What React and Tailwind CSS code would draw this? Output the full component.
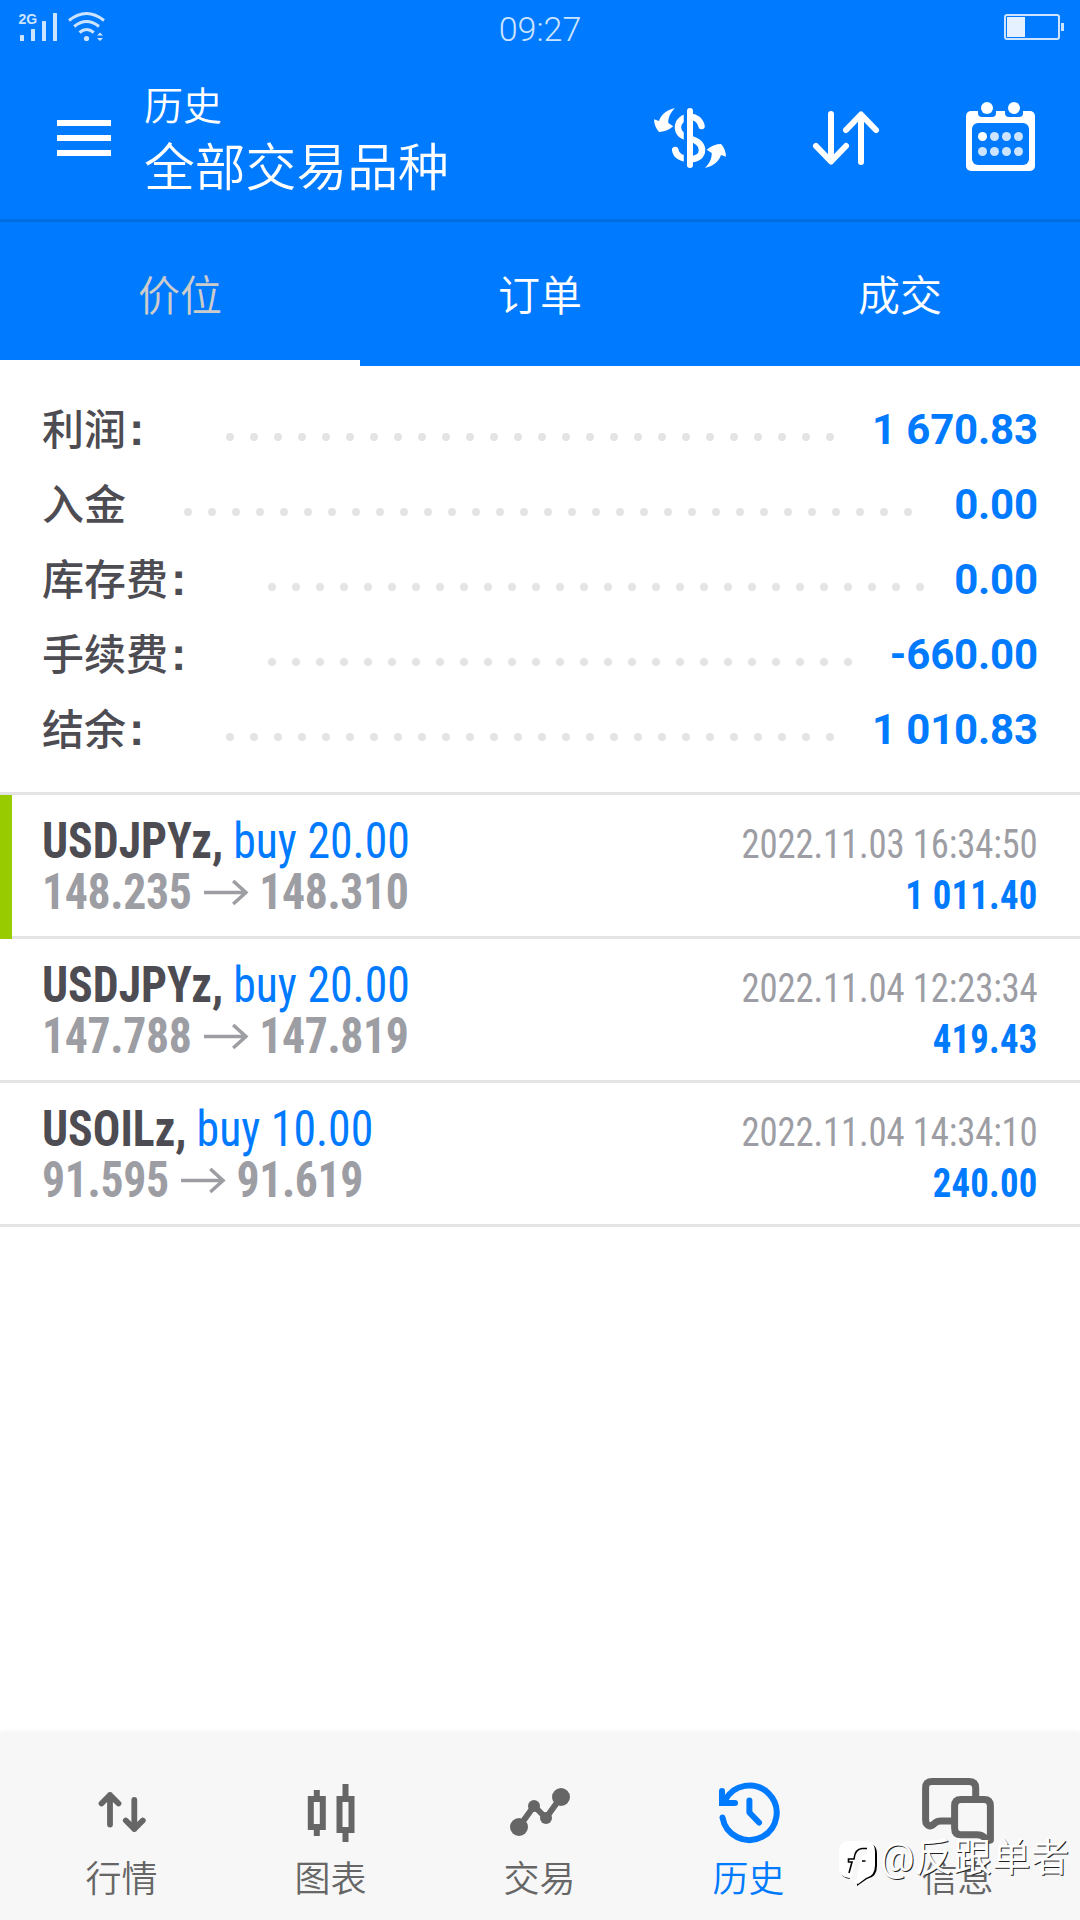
import clsx from 'clsx'

const summary = [
  { label: '利润', colon: true, value: '1 670.83', dots: 26 },
  { label: '入金', value: '0.00', dots: 31 },
  { label: '库存费', colon: true, value: '0.00', dots: 28 },
  { label: '手续费', colon: true, value: '-660.00', dots: 25 },
  { label: '结余', colon: true, value: '1 010.83', dots: 26 },
]

const positions = [
  { id: 1, symbol: 'USDJPYz,', side: 'buy 20.00', open: '148.235', close: '148.310', time: '2022.11.03 16:34:50', profit: '1 011.40', marked: true },
  { id: 2, symbol: 'USDJPYz,', side: 'buy 20.00', open: '147.788', close: '147.819', time: '2022.11.04 12:23:34', profit: '419.43' },
  { id: 3, symbol: 'USOILz,', side: 'buy 10.00', open: '91.595', close: '91.619', time: '2022.11.04 14:34:10', profit: '240.00' },
]

const tabs = ['价位', '订单', '成交']

function SignalIcon() {
  return (
    <svg width="90" height="42" viewBox="18 0 90 42" fill="#cce4ff">
      <text x="18.5" y="24" fontSize="14" fontWeight="bold" fontFamily="Liberation Sans, sans-serif">2G</text>
      <rect x="20" y="35" width="4" height="6" rx="0.5" />
      <rect x="31" y="29" width="4" height="12" rx="0.5" />
      <rect x="42" y="21" width="4" height="20" rx="0.5" />
      <rect x="53" y="13" width="4" height="28" rx="0.5" />
      <g fill="none" stroke="#cce4ff" strokeWidth="3">
        <path d="M69 20.5Q86.5 6.500 104 20.500" />
        <path d="M74.200 26.500Q86.500 16.500 99 26.500" />
        <path d="M79.500 32.500Q86.500 26.500 93.800 32.500" />
      </g>
      <circle cx="86.500" cy="38.500" r="2.600" />
      <path d="M97 35.600L100 32.600L103 35.600ZM97 38L100 41L103 38Z" />
    </svg>
  )
}

function ExchangeIcon() {
  const arrow = 'M21 6C12 8 7 13 5 19L0 17.300C0 22 2 27 5 30C10 30 15 28 19.300 24.300L14.300 21C14 15 17 10 21 6Z'
  return (
    <svg width="72" height="72" viewBox="0 0 72 72" fill="none">
      <path d="M47.500 24C46 18 41.500 14.800 36 14.800C29 14.800 24 19.500 24 25.500C24 32.500 30 34.500 36 36.500C43 38.500 48 42 48 48C48 54 43 57 36 57C27.500 57 22 53.500 21.200 48" stroke="white" strokeWidth="6.500" strokeLinecap="round" />
      <path d="M31.500 8V64" stroke="#007aff" strokeWidth="3.500" />
      <path d="M36 9V63" stroke="white" strokeWidth="6" strokeLinecap="round" />
      <path d={arrow} fill="white" />
      <path d={arrow} fill="white" transform="rotate(180 36 36)" />
    </svg>
  )
}

function SortIcon() {
  return (
    <svg width="72" height="72" viewBox="0 0 72 72" fill="none" stroke="white" strokeWidth="6" strokeLinecap="round" strokeLinejoin="round">
      <path d="M21 12V59M6 44L21 59.500L36 44" />
      <path d="M51 60V13M36 28L51 12.500L66 28" />
    </svg>
  )
}

function CalendarIcon() {
  return (
    <svg width="72" height="72" viewBox="0 0 72 72" fill="none">
      <rect x="0" y="9" width="69" height="60" rx="5" fill="white" />
      <rect x="12" y="5" width="18" height="10" rx="4" fill="#007aff" />
      <rect x="39" y="5" width="18" height="10" rx="4" fill="#007aff" />
      <circle cx="21" cy="6" r="6" fill="white" />
      <circle cx="48" cy="6" r="6" fill="white" />
      <rect x="6" y="21" width="57" height="42" rx="6" fill="#007aff" />
      {[34.5, 49.5].map(y =>
        [16.5, 28.5, 40.5, 52.5].map(x =>
          <circle key={x + '-' + y} cx={x} cy={y} r="4.500" fill={x === 16.5 && y === 34.5 ? 'white' : '#cce4ff'} />
        )
      )}
    </svg>
  )
}

function QuotesIcon() {
  return (
    <g strokeWidth="5.800">
      <path d="M24 48.500V19M15.500 27.500L24 19L32.500 27.500" />
      <path d="M48.300 24V53M39.800 44.500L48.300 53L56.800 44.500" />
    </g>
  )
}

function ChartIcon() {
  return (
    <g strokeWidth="6" strokeLinecap="butt" strokeLinejoin="miter">
      <path d="M15.800 23H27.800V51H15.800ZM21.800 14V22M21.800 52V60" />
      <path d="M44.500 23H56.500V54H44.500ZM50.500 8V22M50.500 55V66" />
    </g>
  )
}

function TradeIcon() {
  return (
    <g>
      <path d="M15 51L30 30L42 42L57 21" strokeWidth="6" />
      <g fill="currentColor" stroke="none">
        <circle cx="15" cy="51" r="9" />
        <circle cx="30" cy="30" r="6" />
        <circle cx="42" cy="42" r="6" />
        <circle cx="57" cy="21" r="9" />
      </g>
    </g>
  )
}

function HistoryIcon() {
  return (
    <g strokeWidth="6">
      <path d="M9.500 41.500A27.300 27.300 0 1 0 12 24.500" />
      <path d="M9 15V27H22" strokeLinejoin="miter" />
      <path d="M36.400 24.500V36.500L46 46.500" />
    </g>
  )
}

function MessagesIcon() {
  return (
    <g strokeWidth="7">
      <path d="M53.700 20V12Q53.700 5.500 47 5.500H10Q3.600 5.500 3.600 12V44Q3.600 49 8 50Q10 50 13 47Q15 45 19 45H30" />
      <path d="M68.400 64V30Q68.400 23.600 62 23.600H39Q32.600 23.600 32.600 30V52Q32.600 58.800 39 58.800H55Q60 58.800 63 62L66 64.500Z" />
    </g>
  )
}

const navItems = [
  { label: '行情', Icon: QuotesIcon },
  { label: '图表', Icon: ChartIcon },
  { label: '交易', Icon: TradeIcon },
  { label: '历史', Icon: HistoryIcon, active: true },
  { label: '信息', Icon: MessagesIcon },
]

function Header() {
  return (
    <header className="bg-[#007aff] text-white">
      <div className="h-[54px] grid grid-cols-3 pl-[18px] pr-4">
        <SignalIcon />
        <span className="justify-self-center mt-[9px] -ml-0.5 text-[34px] leading-10 font-[350] text-[#cce4ff]">09:27</span>
        <div className="justify-self-end mt-[14px] h-[26px] flex items-center gap-px">
          <div className="w-14 h-[26px] border-2 border-[#cce4ff] rounded-[3px] p-px">
            <div className="w-[18px] h-5 bg-[#e6f1ff]" />
          </div>
          <div className="w-[3px] h-2 bg-[#cce4ff]" />
        </div>
      </div>
      <div className="h-[168px] border-b-[3px] border-[#006de3] flex pl-[57px] pr-[42px]">
        <div className="mt-[66px] flex flex-col gap-[9px]">
          <div className="w-[54px] h-1.5 bg-white" />
          <div className="w-[54px] h-1.5 bg-white" />
          <div className="w-[54px] h-1.5 bg-white" />
        </div>
        <div className="ml-[33px] mt-[27px] flex flex-col font-[350]">
          <span className="text-[39px] leading-[52px]">历史</span>
          <span className="mt-0.5 text-[50.8px] leading-[68px]">全部交易品种</span>
        </div>
        <div className="ml-auto mt-12 flex gap-[84px]">
          <ExchangeIcon />
          <SortIcon />
          <CalendarIcon />
        </div>
      </div>
      <div className="h-36 grid grid-cols-3">
        {tabs.map((tab, i) =>
          <div key={tab} className={clsx('flex items-center justify-center pt-2.5 text-[42px] font-[350] border-b-[6px]', i === 0 ? 'text-[#cccccc] border-white' : 'border-transparent')}>
            {tab}
          </div>
        )}
      </div>
    </header>
  )
}

function SummaryRow({ label, colon, value, dots }) {
  return (
    <div className="h-[75px] flex items-center text-[42px]">
      <div className="flex items-baseline text-[#4d4c52] font-medium whitespace-nowrap">
        <span>{label}</span>
        {colon && <span className="w-[42px] pl-[3px] font-bold text-[46px] leading-none font-['Liberation_Sans',sans-serif]">:</span>}
      </div>
      <div className="ml-[58px] mt-3 flex gap-4">
        {Array.from({ length: dots }, (_, i) => <span key={i} className="size-2 rounded-full bg-[#e4e4e4]" />)}
      </div>
      <span className="ml-auto pb-0.5 text-[#007aff] font-bold whitespace-nowrap tracking-[-0.15px]">{value}</span>
    </div>
  )
}

function Position({ item }) {
  return (
    <div className="relative h-36 border-b-[3px] border-[#e4e4e4] pt-[21px] px-[42px] flex justify-between font-stretch-condensed">
      {item.marked && <div className="absolute left-0 top-0 w-3 h-36 bg-[#99cc00]" />}
      <div className="flex flex-col text-[50px] leading-[51px] origin-left scale-x-[0.915]">
        <div className="flex gap-[11px]">
          <span className="font-bold text-[#4d4c52]">{item.symbol}</span>
          <span className="text-[#007aff] font-[430]">{item.side}</span>
        </div>
        <div className="flex items-center text-[#9d9da4] font-bold tracking-[-0.4px]">
          <span>{item.open}</span>
          <svg className="ml-[14px] mr-[11px]" width="49" height="26" viewBox="0 0 46 26" preserveAspectRatio="none" fill="none" stroke="currentColor" strokeWidth="3.600">
            <path d="M0 12.500H43M30 1L43 12.500L30 24" />
          </svg>
          <span>{item.close}</span>
        </div>
      </div>
      <div className="flex flex-col items-end text-[40px] leading-[51px] pt-[3px] origin-right scale-x-[0.918]">
        <span className="text-[#9d9da4] font-[430] tracking-[-0.15px]">{item.time}</span>
        <span className="text-[#007aff] font-bold tracking-[0.25px]">{item.profit}</span>
      </div>
    </div>
  )
}

function Watermark() {
  return (
    <div className="absolute left-[839px] top-[108px] flex text-white">
      <svg width="38" height="46" viewBox="0 0 38 46">
        <path d="M11 2H27Q38 2 38 13V25Q38 36 28 38L18 45V38H11Q1 37 1 27V12Q1 2 11 2Z" fill="black" />
        <path d="M10 0H26Q36 0 36 11V24Q36 35 27 37L19 43L10 37Q0 36 0 26V10Q0 0 10 0Z" fill="white" />
        <path d="M28 11H24Q20 11 19 16L15 39" fill="none" stroke="#f7f7f7" strokeWidth="5" />
        <path d="M28 7.500H23Q16 8 15 18H9.500V21H13L10 32M23 20H26.500" fill="none" stroke="black" strokeWidth="1.600" />
      </svg>
      <span className="ml-[3px] -mt-0.5 text-[38.3px] leading-[38px] tracking-[0.4px] whitespace-nowrap [text-shadow:1px_1px_0_#222]">@反跟单者</span>
    </div>
  )
}

export default function App() {
  return (
    <div className="w-[1080px] h-[1920px] flex flex-col overflow-hidden bg-white font-['Roboto','Noto_Sans_CJK_SC',sans-serif]">
      <Header />
      <section className="h-[429px] pt-[27px] px-[42px] border-b-[3px] border-[#e4e4e4]">
        {summary.map(row => <SummaryRow key={row.label} {...row} />)}
      </section>
      <main className="flex-1">
        {positions.map(item => <Position key={item.id} item={item} />)}
      </main>
      <nav className="relative h-[187px] bg-[#f7f7f7] px-[17.5px] pt-[43px] grid grid-cols-5 shadow-[0_-1px_5px_rgba(0,0,0,0.06)]">
        {navItems.map(({ label, Icon, active }) =>
          <div key={label} className={clsx('flex flex-col items-center', active ? 'text-[#007aff]' : 'text-[#666666]')}>
            <svg width="72" height="72" viewBox="0 0 72 72" fill="none" stroke="currentColor" strokeLinecap="round" strokeLinejoin="round">
              <Icon />
            </svg>
            <span className="mt-1.5 -ml-px text-[36px] leading-[52px] font-[350]">{label}</span>
          </div>
        )}
        <Watermark />
      </nav>
    </div>
  )
}
